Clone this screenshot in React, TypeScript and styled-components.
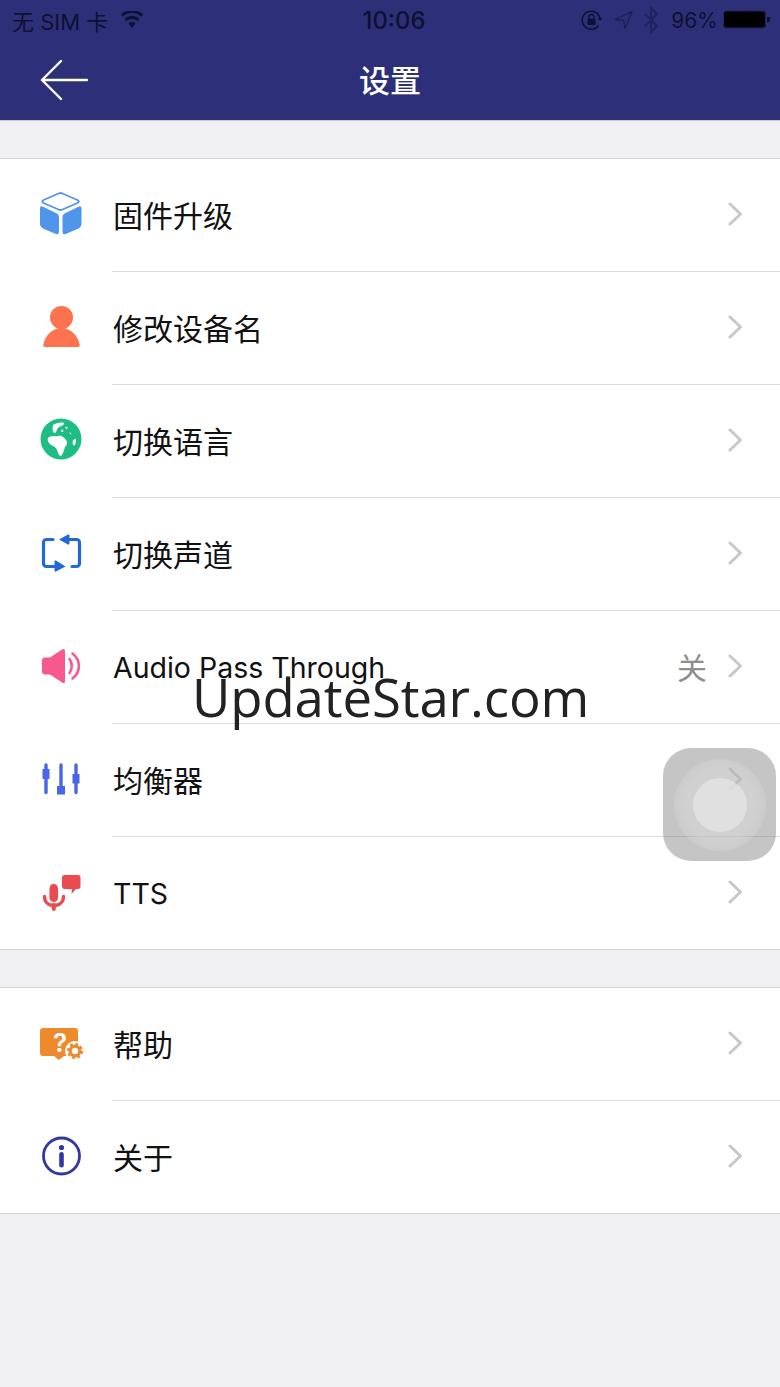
import React from 'react';
import styled, { createGlobalStyle } from 'styled-components';

const GlobalStyle = createGlobalStyle`
  html, body {
    margin: 0;
    padding: 0;
    background: #efeff4;
  }
  body {
    font-family: Inter, "Noto Sans CJK SC", sans-serif;
  }
`;

const Page = styled.div`
  position: relative;
  width: 780px;
  height: 1387px;
  overflow: hidden;
  background: #efeff4;
`;

const Header = styled.header`
  height: 121px;
  box-sizing: border-box;
  background: #2d3079;
  border-bottom: 1px solid #c9c9d0;
`;

const StatusBar = styled.div`
  height: 40px;
  padding: 0 10px 0 12px;
  display: flex;
  align-items: center;
  justify-content: space-between;
  color: #0f1130;
  font-size: 22px;
`;

const StatusSide = styled.div<{ $end?: boolean }>`
  width: 290px;
  display: flex;
  align-items: center;
  gap: 10px;
  justify-content: ${(p) => (p.$end ? 'flex-end' : 'flex-start')};
`;

const Clock = styled.div`
  font-weight: 500;
  font-size: 23.8px;
  margin-left: 6px;
`;

const WifiIcon = styled.svg`
  margin-left: 2px;
`;

const Percent = styled.span`
  font-size: 21px;
  margin-left: 2px;
`;

const BatteryIcon = styled.svg`
  margin-left: -5px;
`;

const NavBar = styled.div`
  height: 80px;
  display: flex;
  align-items: center;
  justify-content: center;
  position: relative;
`;

const BackButton = styled.div`
  position: absolute;
  left: 40px;
  top: 19px;
  line-height: 0;
`;

const NavTitle = styled.div`
  color: #fff;
  font-size: 31px;
  font-weight: 500;
  margin-top: -4px;
`;

const Group = styled.section`
  margin-top: 37px;
  background: #fff;
  border-top: 1px solid #d6d6da;
  border-bottom: 1px solid #d6d6da;
`;

const Row = styled.div`
  height: 113px;
  display: flex;
  align-items: stretch;
  background: #fff;
  &:last-child {
    height: 112px;
  }
`;

const IconSlot = styled.div`
  width: 112px;
  flex: none;
  padding: 33px 0 0 40px;
  box-sizing: border-box;
  line-height: 0;
`;

const RowBody = styled.div<{ $last?: boolean }>`
  flex: 1;
  display: flex;
  align-items: center;
  padding-right: 37px;
  padding-bottom: 2px;
  border-bottom: 1px solid ${(p) => (p.$last ? 'transparent' : '#dcdcde')};
`;

const RowLabel = styled.div<{ $latin?: boolean }>`
  flex: 1;
  padding-left: 1px;
  padding-top: 4px;
  color: #111;
  font-size: ${(p) => (p.$latin ? '28.5px' : '30px')};
  line-height: 40px;
`;

const RowValue = styled.div`
  color: #8e8e8e;
  font-size: 30px;
  margin-right: 20px;
`;

const Watermark = styled.div`
  position: absolute;
  left: 192px;
  top: 661px;
  font-family: "Open Sans", sans-serif;
  font-size: 52.7px;
  line-height: 72px;
  color: #222;
  letter-spacing: -0.1px;
`;

const AssistiveTouch = styled.div`
  position: absolute;
  left: 663px;
  top: 748px;
  width: 113px;
  height: 113px;
  border-radius: 28px;
  background: rgba(110, 110, 110, 0.4);
  display: flex;
  align-items: center;
  justify-content: center;
`;

const TouchRing = styled.div`
  width: 92px;
  height: 92px;
  border-radius: 50%;
  background: radial-gradient(circle, rgba(225, 225, 225, 0.4) 55%, rgba(215, 215, 215, 0.2) 80%, rgba(200, 200, 200, 0) 100%);
  display: flex;
  align-items: center;
  justify-content: center;
`;

const TouchDot = styled.div`
  width: 54px;
  height: 54px;
  border-radius: 50%;
  background: rgba(228, 228, 228, 0.78);
`;

const Chevron = () => (
  <svg width="16" height="24" viewBox="0 0 16 24" fill="none">
    <path d="M3 2l10.500 10L3 22" stroke="#c7c7cc" strokeWidth="3" strokeLinecap="round" strokeLinejoin="round" />
  </svg>
);

const BoxIcon = () => (
  <svg width="42" height="44" viewBox="0 0 42 44">
    <path d="M18.500 1.500Q20.500.5 22.500 1.500L37.500 8Q40 9.500 37.500 11L22.500 17.500Q20.500 18.500 18.500 17.500L3.500 11Q1 9.500 3.500 8z" fill="none" stroke="#4f95ea" strokeWidth="1.800" strokeLinejoin="round" />
    <path d="M2.500 14.500L17 21.500Q19 22.500 19 25V40Q19 43 16 42L4 37Q0 35 0 32V16.500Q0 13.500 2.500 14.500z" fill="#4f95ea" />
    <path d="M39 14.500L24.500 21.500Q22.500 22.500 22.500 25V40Q22.500 43 25.500 42L37.500 37Q41.500 35 41.500 32V16.500Q41.500 13.500 39 14.500z" fill="#4f95ea" />
  </svg>
);

const PersonIcon = () => (
  <svg width="42" height="44" viewBox="0 0 42 44">
    <circle cx="21.500" cy="12.500" r="11.500" fill="#fd7350" />
    <path d="M5 42Q3 42 3.200 40C5 30 13 23 21.500 23S38 30 39.800 40Q40 42 38 42z" fill="#fd7350" />
  </svg>
);

const GlobeIcon = () => (
  <svg width="42" height="42" viewBox="0 0 42 42">
    <circle cx="21" cy="21" r="20.500" fill="#1dbd84" />
    <path d="M13 7C16 5 21 4 24 5C24 8 20 8 18 10C16 12 17 14 15 15C13 15 12 12 13 7z" fill="#fff" />
    <path d="M8 20C11 17 15 19 18 18C21 17 24 19 26 22C28 25 27 27 25 29C24 32 23 36 21 38C19 38 18 35 17 32C16 29 13 28 11 27C9 25 7 23 8 20z" fill="#fff" />
    <path d="M25 8.500l3 1-1.500 2zM21 12l2-.5.5 2-2 .5zM29 14.500l2.500.5-1 1.500z" fill="#fff" />
    <path d="M33 22l3-1.500-.5 5-1.500 2.500-1.500-3z" fill="#fff" />
  </svg>
);

const SwapIcon = () => (
  <svg width="42" height="42" viewBox="0 0 42 42">
    <g fill="none" stroke="#2368d8" strokeWidth="3.200" strokeLinecap="round" strokeLinejoin="round">
      <path d="M13 8.500H6.500A3 3 0 0 0 3.500 11.500V32.500A3 3 0 0 0 6.500 35.500H15" />
      <path d="M29 8.500H36.500A3 3 0 0 1 39.500 11.500V32.500A3 3 0 0 1 36.500 35.500H32" />
    </g>
    <path d="M19 8.500L28 3.500Q29.500 3 29.500 4.500V12.500Q29.500 14 28 13.500zM25.500 35.500L16 40.500Q14.500 41 14.500 39.500V30.500Q14.500 29 16 29.500z" fill="#2368d8" />
  </svg>
);

const SpeakerIcon = () => (
  <svg width="42" height="42" viewBox="0 0 42 42">
    <path d="M5 13.500h5L22 5.500c1.800-1.200 3-.5 3 1.500v30c0 2-1.200 2.700-3 1.500L10 30.500H5c-1.800 0-3-1.200-3-3v-11c0-1.800 1.200-3 3-3z" fill="#f7598f" />
    <g fill="none" stroke="#f7598f" strokeWidth="2.600" strokeLinecap="round">
      <path d="M29.500 15c3 3.500 3 10.500 0 14" />
      <path d="M32.500 9.500c8.500 6.500 8.500 18.500 0 25" />
    </g>
  </svg>
);

const SlidersIcon = () => (
  <svg width="42" height="42" viewBox="0 0 42 42">
    <g stroke="#4a66e6" strokeWidth="3.400" strokeLinecap="round">
      <path d="M6 8v27.500M21 8v27.500M36 8v27.500" />
    </g>
    <path d="M2.500 12h7v10h-7zM17 29h8v8.500h-8zM32.500 17h7v9.500h-7z" fill="#4a66e6" />
  </svg>
);

const TtsIcon = () => (
  <svg width="42" height="42" viewBox="0 0 42 42">
    <path d="M24.500 5H38c1.500 0 2.500 1 2.500 2.500v9c0 1.500-1 2.500-2.500 2.500h-2l-4.500 5 .5-5h-7.500C23 19 22 18 22 16.500v-9C22 6 23 5 24.500 5z" fill="#ea4b50" />
    <rect x="9.500" y="14" width="8.500" height="18" rx="4.250" fill="#ea4b50" />
    <path d="M4.500 26.500c0 5.500 4 9 9.500 9s9.500-3.500 9.500-9" fill="none" stroke="#ea4b50" strokeWidth="3.400" strokeLinecap="round" />
    <path d="M13.800 35v4" stroke="#ea4b50" strokeWidth="4" strokeLinecap="round" />
  </svg>
);

const HelpIcon = () => (
  <svg width="44" height="42" viewBox="0 0 44 42">
    <path d="M3 7h32c2 0 3 1 3 3v22c0 2-1 3-3 3H24l-5 4-5-4H3c-2 0-3-1-3-3V10c0-2 1-3 3-3z" fill="#ee8a2c" />
    <text x="20" y="31" textAnchor="middle" fontFamily="Inter, sans-serif" fontWeight="600" fontSize="26" fill="#fff">?</text>
    <circle cx="35" cy="30" r="10" fill="#fff" />
    <circle cx="35" cy="30" r="4.800" fill="none" stroke="#ee8a2c" strokeWidth="3.200" />
    <circle cx="35" cy="30" r="7" fill="none" stroke="#ee8a2c" strokeWidth="2.200" strokeDasharray="3 2.500" />
  </svg>
);

const InfoIcon = () => (
  <svg width="42" height="44" viewBox="0 0 42 44">
    <circle cx="21.500" cy="22" r="18" fill="none" stroke="#3138a0" strokeWidth="2.800" />
    <circle cx="21.500" cy="13.500" r="2.600" fill="#3138a0" />
    <rect x="19.200" y="18" width="4.600" height="15.500" rx="2.300" fill="#3138a0" />
  </svg>
);

const StatusIcons = () => (
  <>
    <svg width="22" height="22" viewBox="0 0 22 22" fill="none">
      <path d="M17.500 16.500A9 9 0 1 1 19 9.500" stroke="#0f1130" strokeWidth="1.500" />
      <path d="M16.500 9h5l-2.500 3z" fill="#0f1130" />
      <rect x="6.500" y="9.500" width="8" height="6.500" rx="1" fill="#0f1130" />
      <path d="M8 9.500V8a2.500 2.500 0 0 1 5 0v1.500" stroke="#0f1130" strokeWidth="1.300" />
    </svg>
    <svg width="20" height="20" viewBox="0 0 20 20" fill="none">
      <path d="M19 1.500L2 9.500l8.500 1 1.500 8z" stroke="#1c1f52" strokeWidth="1.300" strokeLinejoin="round" />
    </svg>
    <svg width="16" height="28" viewBox="0 0 16 28" fill="none">
      <path d="M2 8l12 12-6 6V2l6 6L2 20" stroke="#1f2260" strokeWidth="1.900" />
    </svg>
    <Percent>96%</Percent>
    <BatteryIcon width="47" height="20" viewBox="0 0 47 20">
      <rect x="0.500" y="1" width="42" height="17" rx="2.500" fill="#000" stroke="#23255c" />
      <path d="M44 7h1a2 2 0 0 1 0 5h-1z" fill="#0f1130" />
    </BatteryIcon>
  </>
);

type Item = { icon: React.ReactNode; label: string; value?: string; latin?: boolean };

const firstGroup: Item[] = [
  { icon: <BoxIcon />, label: '固件升级' },
  { icon: <PersonIcon />, label: '修改设备名' },
  { icon: <GlobeIcon />, label: '切换语言' },
  { icon: <SwapIcon />, label: '切换声道' },
  { icon: <SpeakerIcon />, label: 'Audio Pass Through', value: '关', latin: true },
  { icon: <SlidersIcon />, label: '均衡器' },
  { icon: <TtsIcon />, label: 'TTS', latin: true },
];

const secondGroup: Item[] = [
  { icon: <HelpIcon />, label: '帮助' },
  { icon: <InfoIcon />, label: '关于' },
];

function SettingsGroup({ items }: { items: Item[] }) {
  return (
    <Group>
      {items.map((item, index) => (
        <Row key={item.label}>
          <IconSlot>{item.icon}</IconSlot>
          <RowBody $last={index === items.length - 1}>
            <RowLabel $latin={item.latin}>{item.label}</RowLabel>
            {item.value && <RowValue>{item.value}</RowValue>}
            <Chevron />
          </RowBody>
        </Row>
      ))}
    </Group>
  );
}

export default function App() {
  return (
    <Page>
      <GlobalStyle />
      <Header>
        <StatusBar>
          <StatusSide>
            <span>无 SIM 卡</span>
            <WifiIcon width="24" height="18" viewBox="0 0 24 18">
              <path d="M12 17l-3.500-4.500a5.500 5.500 0 0 1 7 0zM6.500 10L4.500 7.500a11.500 11.500 0 0 1 15 0L17.500 10a8.500 8.500 0 0 0-11 0zM2.800 5.500L1 3.200a17 17 0 0 1 22 0l-1.800 2.300a14 14 0 0 0-18.400 0z" fill="#0f1130" />
            </WifiIcon>
          </StatusSide>
          <Clock>10:06</Clock>
          <StatusSide $end>
            <StatusIcons />
          </StatusSide>
        </StatusBar>
        <NavBar>
          <BackButton>
            <svg width="48" height="42" viewBox="0 0 48 42" fill="none">
              <path d="M21 2L2 21l19 19M2 21h45" stroke="#fff" strokeWidth="2.400" strokeLinecap="round" strokeLinejoin="round" />
            </svg>
          </BackButton>
          <NavTitle>设置</NavTitle>
        </NavBar>
      </Header>
      <SettingsGroup items={firstGroup} />
      <SettingsGroup items={secondGroup} />
      <Watermark>UpdateStar.com</Watermark>
      <AssistiveTouch>
        <TouchRing>
          <TouchDot />
        </TouchRing>
      </AssistiveTouch>
    </Page>
  );
}
